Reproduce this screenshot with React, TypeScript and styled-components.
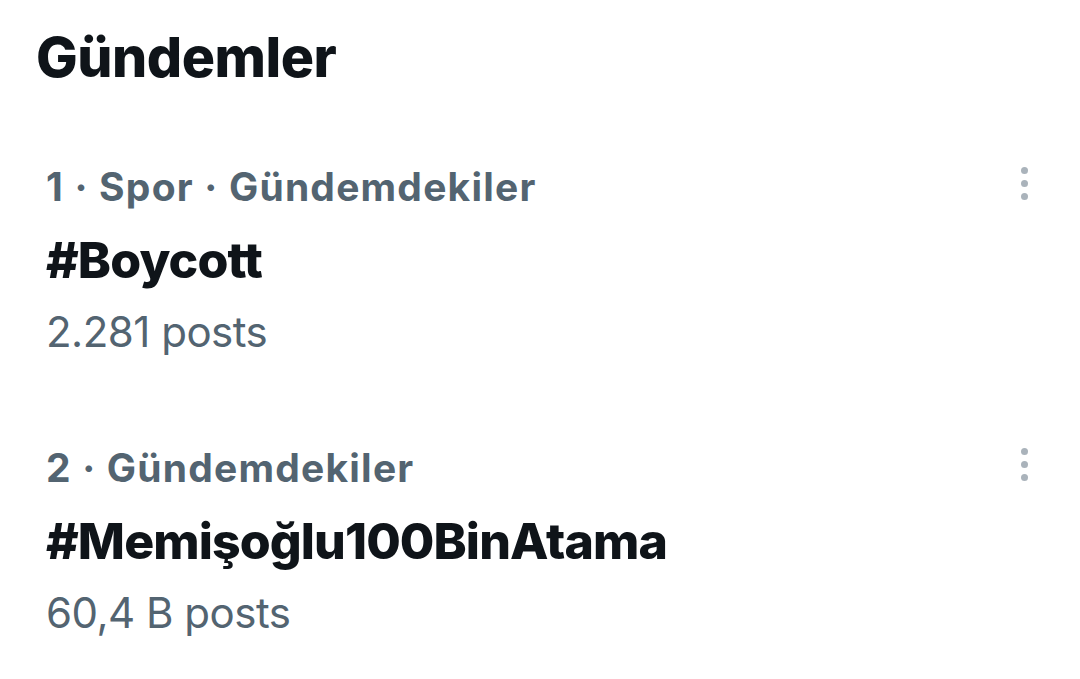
import React from "react";
import styled, { createGlobalStyle } from "styled-components";

const Global = createGlobalStyle`
  html, body { margin: 0; padding: 0; background: #ffffff; }
  body {
    font-family: Inter, "Noto Sans", "Liberation Sans", sans-serif;
    font-variant-ligatures: none;
    font-feature-settings: "liga" 0, "calt" 0;
  }
`;

const Page = styled.div`
  width: 1080px;
  height: 679px;
  background: #fff;
  overflow: hidden;
  display: flex;
  flex-direction: column;
`;

const Title = styled.h1`
  margin: 0;
  padding: 22px 0 0 36px;
  font-size: 55.5px;
  line-height: 70px;
  font-weight: 800;
  color: #0f1419;
  letter-spacing: -0.5px;
`;

const List = styled.div`
  display: flex;
  flex-direction: column;
  gap: 64px;
  padding: 58px 0 0 46px;
`;

const Item = styled.div`
  position: relative;
  display: flex;
  flex-direction: column;
`;

const Meta = styled.div`
  font-size: 39px;
  line-height: 74px;
  height: 74px;
  font-weight: 700;
  letter-spacing: 1.2px;
  color: #536471;
`;

const Tag = styled.div`
  font-size: 50px;
  line-height: 72px;
  font-weight: 800;
  letter-spacing: -0.9px;
  color: #0f1419;
`;

const Posts = styled.div`
  font-size: 42px;
  line-height: 71px;
  font-weight: 400;
  letter-spacing: -0.5px;
  color: #536471;
`;

const More = styled.div`
  position: absolute;
  right: 52px;
  top: 17px;
  display: flex;
  flex-direction: column;
  gap: 6px;
`;

const Dot = styled.span`
  width: 7px;
  height: 7px;
  border-radius: 50%;
  background: #aab3bb;
`;

const trends = [
  { meta: "1 · Spor · Gündemdekiler", tag: "#Boycott", posts: "2.281 posts" },
  { meta: "2 · Gündemdekiler", tag: "#Memişoğlu100BinAtama", posts: "60,4 B posts" },
];

export default function App() {
  return (
    <Page>
      <Global />
      <Title>Gündemler</Title>
      <List>
        {trends.map((t) => (
          <Item key={t.tag}>
            <Meta>{t.meta}</Meta>
            <Tag>{t.tag}</Tag>
            <Posts>{t.posts}</Posts>
            <More>
              <Dot />
              <Dot />
              <Dot />
            </More>
          </Item>
        ))}
      </List>
    </Page>
  );
}
